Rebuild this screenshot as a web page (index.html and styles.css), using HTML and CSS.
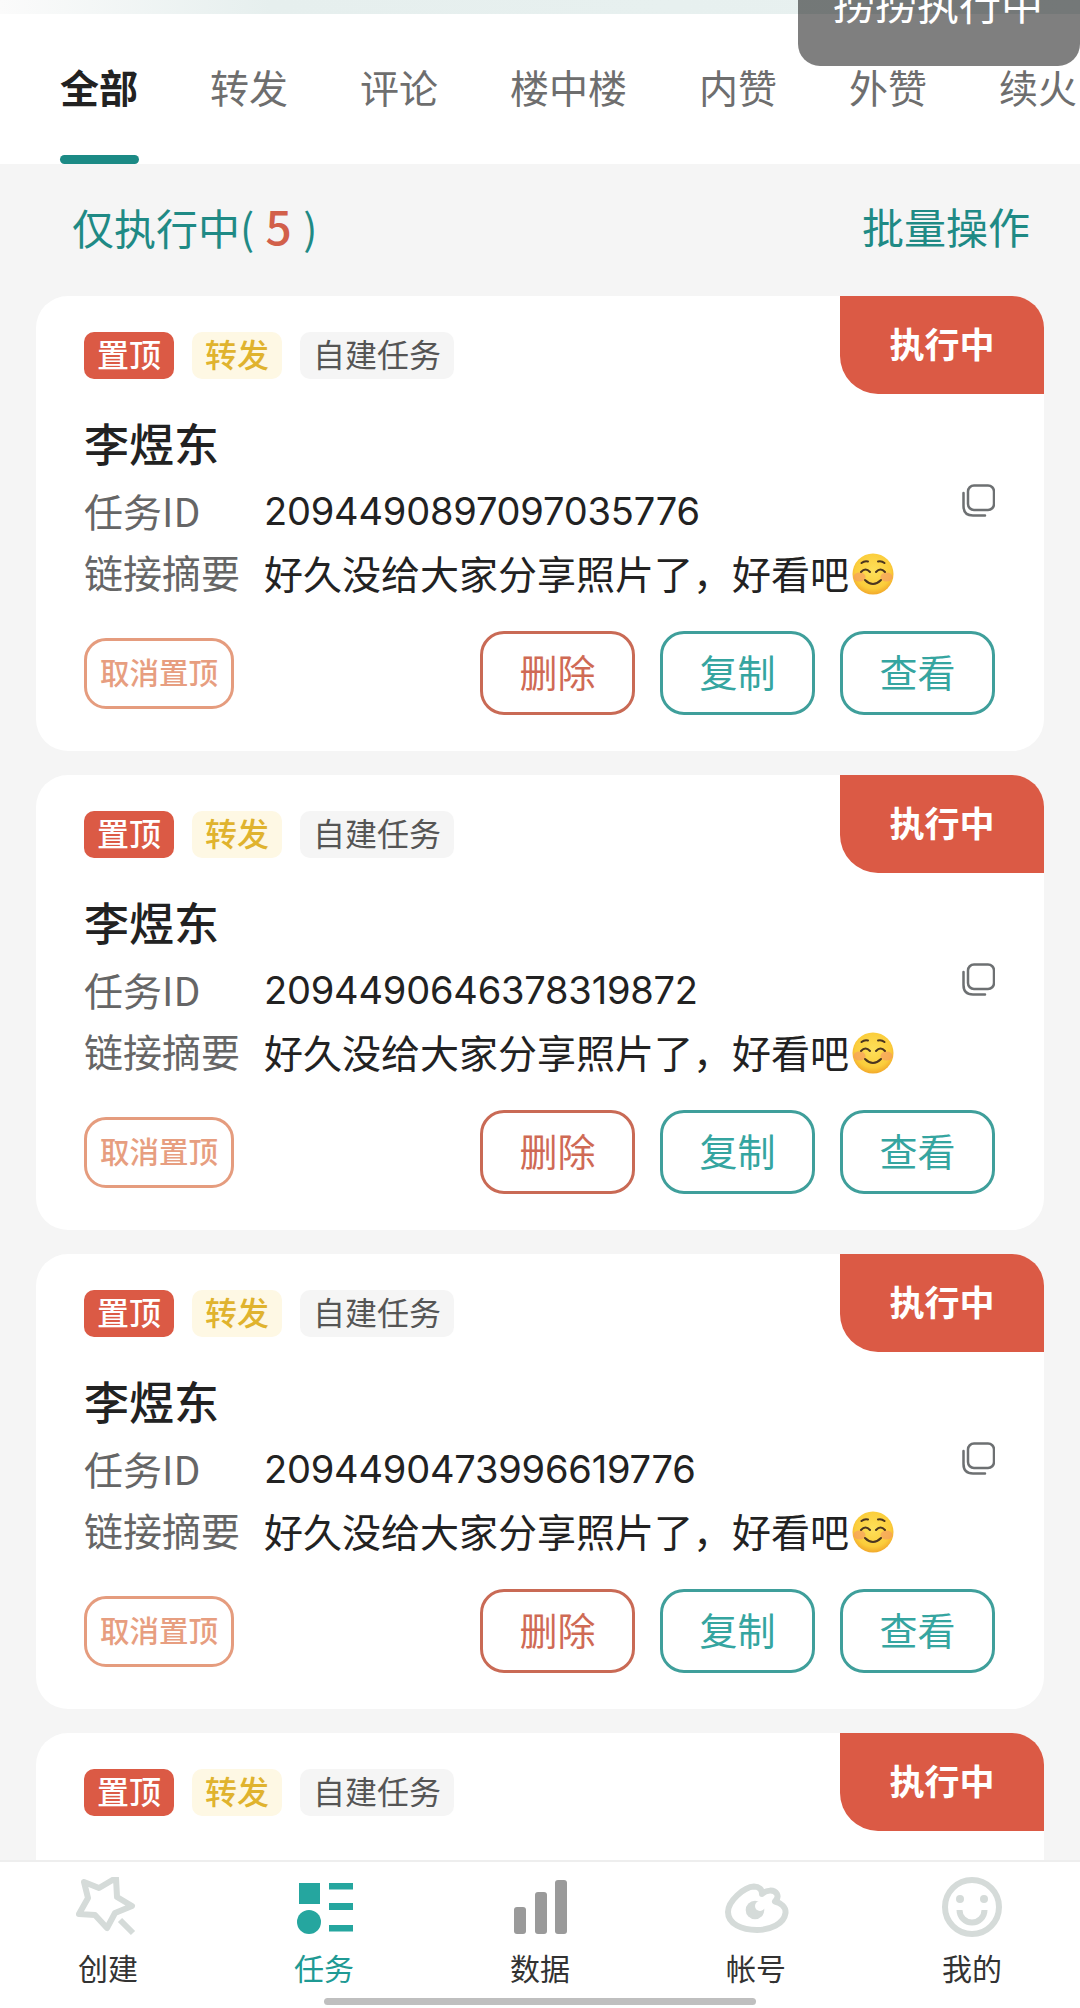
FILE: index.html
```html
<!DOCTYPE html>
<html lang="zh-CN">
<head>
    <meta charset="UTF-8">
    <meta name="viewport" content="width=device-width, initial-scale=1.0">
    <title>任务</title>
    <link rel="stylesheet" href="styles.css">
</head>
<body>
    <div class="app">
        <div class="topStrip"></div>
        <div class="toast">捞捞执行中</div>

        <div class="tabs">
            <div class="tab active">全部</div>
            <div class="tab">转发</div>
            <div class="tab">评论</div>
            <div class="tab">楼中楼</div>
            <div class="tab">内赞</div>
            <div class="tab">外赞</div>
            <div class="tab">续火</div>
        </div>

        <div class="main">
            <div class="filterRow">
                <div class="filterLabel">仅执行中( <span class="count">5</span> )</div>
                <div class="batch">批量操作</div>
            </div>

            <div class="card">
                <div class="status">执行中</div>
                <div class="tags">
                    <span class="tag tagTop">置顶</span>
                    <span class="tag tagType">转发</span>
                    <span class="tag tagOwn">自建任务</span>
                </div>
                <div class="name">李煜东</div>
                <div class="row">
                    <span class="rowLabel">任务ID</span>
                    <span class="rowValue rowId">2094490897097035776</span>
                    <svg class="copyIcon" viewBox="0 0 33 33"><use href="#iconCopy"/></svg>
                </div>
                <div class="row">
                    <span class="rowLabel">链接摘要</span>
                    <span class="rowValue">好久没给大家分享照片了，好看吧<svg class="emoji" viewBox="0 0 42 42"><use href="#iconEmoji"/></svg></span>
                </div>
                <div class="actions">
                    <button class="unpin">取消置顶</button>
                    <div class="actionGroup">
                        <button class="btn btnRed">删除</button>
                        <button class="btn">复制</button>
                        <button class="btn">查看</button>
                    </div>
                </div>
            </div>

            <div class="card">
                <div class="status">执行中</div>
                <div class="tags">
                    <span class="tag tagTop">置顶</span>
                    <span class="tag tagType">转发</span>
                    <span class="tag tagOwn">自建任务</span>
                </div>
                <div class="name">李煜东</div>
                <div class="row">
                    <span class="rowLabel">任务ID</span>
                    <span class="rowValue rowId">2094490646378319872</span>
                    <svg class="copyIcon" viewBox="0 0 33 33"><use href="#iconCopy"/></svg>
                </div>
                <div class="row">
                    <span class="rowLabel">链接摘要</span>
                    <span class="rowValue">好久没给大家分享照片了，好看吧<svg class="emoji" viewBox="0 0 42 42"><use href="#iconEmoji"/></svg></span>
                </div>
                <div class="actions">
                    <button class="unpin">取消置顶</button>
                    <div class="actionGroup">
                        <button class="btn btnRed">删除</button>
                        <button class="btn">复制</button>
                        <button class="btn">查看</button>
                    </div>
                </div>
            </div>

            <div class="card">
                <div class="status">执行中</div>
                <div class="tags">
                    <span class="tag tagTop">置顶</span>
                    <span class="tag tagType">转发</span>
                    <span class="tag tagOwn">自建任务</span>
                </div>
                <div class="name">李煜东</div>
                <div class="row">
                    <span class="rowLabel">任务ID</span>
                    <span class="rowValue rowId">2094490473996619776</span>
                    <svg class="copyIcon" viewBox="0 0 33 33"><use href="#iconCopy"/></svg>
                </div>
                <div class="row">
                    <span class="rowLabel">链接摘要</span>
                    <span class="rowValue">好久没给大家分享照片了，好看吧<svg class="emoji" viewBox="0 0 42 42"><use href="#iconEmoji"/></svg></span>
                </div>
                <div class="actions">
                    <button class="unpin">取消置顶</button>
                    <div class="actionGroup">
                        <button class="btn btnRed">删除</button>
                        <button class="btn">复制</button>
                        <button class="btn">查看</button>
                    </div>
                </div>
            </div>

            <div class="card">
                <div class="status">执行中</div>
                <div class="tags">
                    <span class="tag tagTop">置顶</span>
                    <span class="tag tagType">转发</span>
                    <span class="tag tagOwn">自建任务</span>
                </div>
            </div>
        </div>

        <div class="tabBar">
            <div class="barItem">
                <svg class="barIcon" viewBox="0 0 80 60">
                    <path d="M16 5 L31 11 L48 1 L49 20 L64 29 L47 36 L39 51 L27 38 L11 37 L20 21 Z" fill="none" stroke="#d5dbd9" stroke-width="6" stroke-linejoin="round"/>
                    <path d="M52 43 L65 56" stroke="#d5dbd9" stroke-width="6"/>
                </svg>
                <span>创建</span>
            </div>
            <div class="barItem current">
                <svg class="barIcon" viewBox="0 0 80 60" fill="#25a69f">
                    <rect x="15" y="6" width="21" height="21"/>
                    <circle cx="25" cy="45" r="12"/>
                    <rect x="45" y="6" width="24" height="6.500"/>
                    <rect x="45" y="26" width="24" height="7"/>
                    <rect x="45" y="48" width="24" height="6.500"/>
                </svg>
                <span>任务</span>
            </div>
            <div class="barItem">
                <svg class="barIcon" viewBox="0 0 80 60" fill="#9a9a9a">
                    <rect x="14" y="30" width="12" height="27" rx="3"/>
                    <rect x="35" y="15" width="12" height="42" rx="3"/>
                    <rect x="55" y="3" width="12" height="54" rx="3"/>
                </svg>
                <span>数据</span>
            </div>
            <div class="barItem">
                <svg class="barIcon" viewBox="0 0 80 60">
                    <path d="M12 35 C12 24 28 10 38 9.500 C43 9.500 46 12 46 17 C50 13 58 12 61 17 C63 21 60 23 59 24.500 C65 26 70 30 69.500 36 C68 47 54 53 41 53 C26 53 12 47 12 35 Z" fill="none" stroke="#d5dbd9" stroke-width="6" stroke-linejoin="round"/>
                    <circle cx="39" cy="33" r="9.300" fill="#d5dbd9"/>
                    <circle cx="44" cy="29" r="5" fill="#fff"/>
                </svg>
                <span>帐号</span>
            </div>
            <div class="barItem">
                <svg class="barIcon" viewBox="0 0 80 60" fill="#d5dbd9">
                    <circle cx="40" cy="30" r="27" fill="none" stroke="#d5dbd9" stroke-width="6"/>
                    <circle cx="28" cy="22" r="4"/>
                    <circle cx="52" cy="22" r="4"/>
                    <path d="M27.500 33 A12.500 12.500 0 0 0 52.500 33" fill="none" stroke="#d5dbd9" stroke-width="6"/>
                </svg>
                <span>我的</span>
            </div>
        </div>
        <div class="homeBar"></div>
    </div>

    <svg class="sprite">
        <defs>
            <radialGradient id="faceFill" cx="50%" cy="42%" r="58%">
                <stop offset="0%" stop-color="#fde05a"/>
                <stop offset="75%" stop-color="#fbcd3b"/>
                <stop offset="100%" stop-color="#f2a92b"/>
            </radialGradient>
        </defs>
        <symbol id="iconCopy" viewBox="0 0 33 33">
            <rect x="6" y="1.500" width="26" height="24.500" rx="6" fill="none" stroke="#6d7072" stroke-width="2.500"/>
            <path d="M1.500 9 V22 Q1.500 31.500 11 31.500 H23" fill="none" stroke="#6d7072" stroke-width="2.500" stroke-linecap="round"/>
        </symbol>
        <symbol id="iconEmoji" viewBox="0 0 42 42">
            <circle cx="21" cy="21" r="20.500" fill="url(#faceFill)"/>
            <ellipse cx="7.500" cy="24" rx="6" ry="4.500" fill="#f4926a" opacity="0.55"/>
            <ellipse cx="34.500" cy="24" rx="6" ry="4.500" fill="#f4926a" opacity="0.55"/>
            <path d="M9 19 Q13.500 14 18 19 M24 19 Q28.500 14 33 19 M13 27 Q21 35 29 27 M9.500 10 Q12.500 7.500 16 8.500 M26 8.500 Q29.500 7.500 32.500 10" fill="none" stroke="#4a3520" stroke-width="2" stroke-linecap="round"/>
        </symbol>
    </svg>
</body>
</html>
```

FILE: styles.css
```css
* {
    box-sizing: border-box;
}

body {
    margin: 0;
    font-family: "Noto Sans CJK SC", "Noto Sans", sans-serif;
    background-color: #f5f5f5;
}

.app {
    position: relative;
    width: 1080px;
    height: 2008px;
    display: flex;
    flex-direction: column;
    overflow: hidden;
}

.sprite {
    position: absolute;
    width: 0;
    height: 0;
}

.topStrip {
    height: 14px;
    background: linear-gradient(90deg, #fbfbfb 0%, #e6efee 25%, #e8f1f0 100%);
}

.toast {
    position: absolute;
    top: -18px;
    right: 0;
    width: 282px;
    height: 84px;
    padding-left: 35px;
    background-color: rgba(0, 0, 0, 0.5);
    border-radius: 0 0 22px 22px;
    color: #fff;
    font-size: 42px;
    line-height: 40px;
}

/* tabs */
.tabs {
    height: 150px;
    background-color: #fff;
    display: flex;
    gap: 72px;
    padding-left: 60px;
    overflow: hidden;
    flex-shrink: 0;
}

.tab {
    position: relative;
    font-size: 39px;
    line-height: 44px;
    padding-top: 50px;
    color: #6e6e6e;
    white-space: nowrap;
}

.tab.active {
    color: #222;
    font-weight: 700;
}

.tab.active::after {
    content: "";
    position: absolute;
    left: 0;
    right: -1px;
    bottom: 0;
    height: 9px;
    background-color: #1b8a85;
    border-radius: 5px;
}

/* list */
.main {
    flex: 1;
    min-height: 0;
    overflow: hidden;
    padding: 0 36px;
}

.filterRow {
    height: 132px;
    padding: 0 14px 10px 36px;
    display: flex;
    align-items: center;
    justify-content: space-between;
    font-size: 42px;
    color: #1f8a85;
}

.count {
    margin: 0 2px;
    font-size: 46px;
    font-weight: 500;
    color: #d2604a;
}

.card {
    position: relative;
    height: 455px;
    margin-bottom: 24px;
    padding: 36px 38px 0 48px;
    background-color: #fff;
    border-radius: 32px;
}

.status {
    position: absolute;
    top: 0;
    right: 0;
    width: 204px;
    height: 98px;
    padding-bottom: 6px;
    display: flex;
    align-items: center;
    justify-content: center;
    background-color: #db5a45;
    border-radius: 0 32px 0 38px;
    color: #fff;
    font-size: 35px;
    font-weight: 700;
}

.tags {
    display: flex;
    gap: 18px;
    height: 47px;
}

.tag {
    height: 47px;
    padding: 0 13px;
    border-radius: 10px;
    font-size: 32px;
    line-height: 42px;
}

.tagTop {
    background-color: #db5a45;
    color: #fff;
    font-weight: 500;
}

.tagType {
    background-color: #fef8e4;
    color: #e0b32e;
    font-weight: 500;
}

.tagOwn {
    background-color: #f5f5f5;
    color: #555;
}

.name {
    margin-top: 34px;
    margin-bottom: 8px;
    font-size: 45px;
    line-height: 60px;
    font-weight: 500;
    color: #222;
}

.row {
    position: relative;
    display: flex;
    height: 61px;
    align-items: center;
    font-size: 39px;
}

.rowLabel {
    width: 180px;
    flex-shrink: 0;
    padding-bottom: 3px;
    color: #666;
}

.rowValue {
    display: flex;
    align-items: center;
    padding-bottom: 1px;
    color: #222;
    font-size: 39px;
}

.rowId {
    font-family: Inter, "Noto Sans CJK SC", sans-serif;
    font-size: 38px;
    letter-spacing: -0.2px;
}

.copyIcon {
    position: absolute;
    right: 11px;
    top: 3px;
    width: 33px;
    height: 33px;
}

.emoji {
    width: 42px;
    height: 42px;
    margin-left: 3px;
    margin-top: 4px;
}

.actions {
    margin-top: 28px;
    display: flex;
    align-items: center;
    justify-content: space-between;
    padding-right: 11px;
}

button {
    font-family: inherit;
    background-color: #fff;
    cursor: pointer;
    padding: 0 0 5px;
}

.unpin {
    width: 150px;
    height: 71px;
    border: 3px solid #e59c7e;
    border-radius: 22px;
    color: #e79e80;
    font-size: 29.500px;
    font-weight: 500;
}

.actionGroup {
    display: flex;
    gap: 25px;
}

.btn {
    width: 155px;
    height: 84px;
    border: 3px solid #3f9f9b;
    border-radius: 24px;
    color: #35a5a0;
    font-size: 38px;
}

.btnRed {
    border-color: #c96a55;
    color: #cf6a55;
}

/* bottom bar */
.tabBar {
    height: 148px;
    flex-shrink: 0;
    display: grid;
    grid-template-columns: repeat(5, 1fr);
    background-color: #fff;
    border-top: 2px solid #eeeeee;
}

.barItem {
    display: flex;
    flex-direction: column;
    align-items: center;
    padding-top: 15px;
    font-size: 30px;
    line-height: 42px;
    color: #333;
}

.barItem.current {
    color: #1f9a94;
}

.barIcon {
    width: 80px;
    height: 60px;
    margin-bottom: 9px;
}

.homeBar {
    position: absolute;
    left: 324px;
    bottom: 3px;
    width: 432px;
    height: 7px;
    border-radius: 4px;
    background-color: #bfbfbf;
}
```
